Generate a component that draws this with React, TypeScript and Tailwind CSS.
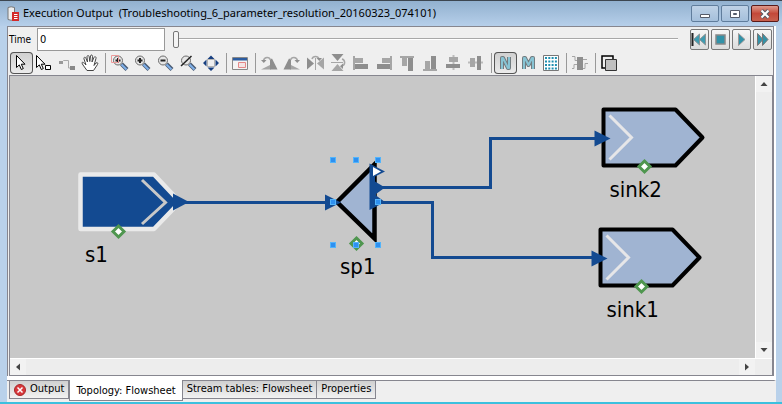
import { useState } from "react";
import type { ReactNode } from "react";

const BLUE = "#134a91";
const STEEL = "#a0b4d2";
const GREY = "#a6a6a6";
const DARK = "#8e8e8e";

type Tool = { label: string; icon: ReactNode };

const Cursor = ({ x = 0 }: { x?: number }) => (
  <path
    d={`M${x + 6.5} 3.500v12l2.800-2.600 2 4.600 2-.9-2-4.400h3.700z`}
    fill="#fff"
    stroke="#000"
    strokeWidth="1"
  />
);

const Lens = ({ children }: { children?: ReactNode }) => (
  <>
    <path d="M12.500 12l5.500 5.500" stroke="#4a5a72" strokeWidth="4" />
    <path d="M12.500 12.500l5 5" stroke="#7fb0ea" strokeWidth="2" />
    <circle cx="9" cy="8.500" r="4.500" fill="#e6e6e6" stroke="#6c6c6c" />
    {children}
  </>
);

const Turn = () => (
  <>
    <path d="M3 17.500l10-5v5z" fill={GREY} />
    <path d="M12 7.500l2-1 5.500 11H12z" fill={DARK} />
    <path d="M5.500 8.500c1-4 6-4 7-.5" fill="none" stroke={GREY} strokeWidth="1.500" />
    <path d="M3 8h5.500l-2.700 3z" fill={DARK} />
  </>
);

const Mirror = () => (
  <>
    <path d="M3 5.500v12l7-6z" fill={DARK} />
    <path d="M20 5.500v12l-7-6z" fill={GREY} />
    <path d="M11.500 6v12" stroke={GREY} />
    <path d="M8 7c1-3.500 6-3.500 7 0" fill="none" stroke={GREY} strokeWidth="1.500" />
    <path d="M12.500 6h5.500l-2.700 3z" fill={DARK} />
  </>
);

const AlignSide = () => (
  <>
    <path d="M4 4v14" stroke={GREY} strokeWidth="2" />
    <path d="M5 6h8v5H5z" fill={GREY} />
    <path d="M5 12h13v5H5z" fill={DARK} />
  </>
);

const AlignMiddle = () => (
  <>
    <path d="M11.500 3v15" stroke="#bbb" strokeWidth="2" />
    <path d="M7 5h9v5H7z" fill={GREY} />
    <path d="M4 12h14v4H4z" fill={DARK} />
  </>
);

const Letter = ({ d }: { d: string }) => (
  <>
    <path d={d} fill="none" stroke="#727c80" strokeWidth="4" strokeLinejoin="round" />
    <path d={d} fill="none" stroke="#88c4d4" strokeWidth="2" strokeLinejoin="round" />
  </>
);

const groups: Tool[][] = [
  [
    { label: "Select", icon: <Cursor /> },
    {
      label: "Select area",
      icon: (
        <>
          <Cursor x={-3} />
          <path d="M12.500 13.500h5v4h-5z" fill="#fff" stroke="#000" />
        </>
      ),
    },
    {
      label: "Connect",
      icon: (
        <>
          <path d="M3 9h4v3H3z" fill="#999" />
          <path d="M14 14h5v4h-5z" fill="#888" />
          <path d="M7.500 9V8.500h5V16H14" fill="none" stroke="#aaa" />
        </>
      ),
    },
    {
      label: "Pan",
      icon: (
        <path
          d="M8 18.500l-4-5.500c-2-3-.5-3.500 1.500-1.500L7 13 5 7c-.5-2 1.500-2.500 2-.5L8.500 10 8 5c0-2 2-2 2.200 0l.6 4.500.7-5.500c.3-1.500 2-1.300 2 .3L13 10l2-4.500c.7-1.500 2.300-.8 2 .8l-2 7.200 2-2.500c1.500-1 2.300.3 1.500 1.500l-4 6z"
          fill="#fff"
          stroke="#444"
        />
      ),
    },
  ],
  [
    {
      label: "Zoom to area",
      icon: (
        <>
          <g transform="translate(1 0)">
            <Lens>
              <path d="M6.500 8.500h5M9 6v5" stroke="#222" strokeWidth="2" />
            </Lens>
          </g>
          <path d="M3.500 3.500h7v7h-7z" fill="none" stroke="#ec9a9a" />
        </>
      ),
    },
    {
      label: "Zoom in",
      icon: (
        <Lens>
          <path d="M6.500 8.500h5M9 6v5" stroke="#222" strokeWidth="2" />
        </Lens>
      ),
    },
    {
      label: "Zoom out",
      icon: (
        <Lens>
          <path d="M6.500 8.500h5" stroke="#222" strokeWidth="2" />
        </Lens>
      ),
    },
    {
      label: "Reset zoom",
      icon: (
        <Lens>
          <path d="M4 14L14.500 4" stroke="#222" strokeWidth="1.500" />
        </Lens>
      ),
    },
    {
      label: "Fit to window",
      icon: (
        <>
          <path d="M7.500 7.500h7v7h-7z" fill="none" stroke="#777" strokeDasharray="1 1" />
          <path d="M11 3.500L14.500 7h-7zM11 19l3.500-3.500h-7zM3 11l3.500-3.500v7zM19 11l-3.500-3.500v7z" fill="#173f80" />
        </>
      ),
    },
  ],
  [
    {
      label: "Properties window",
      icon: (
        <>
          <path d="M3.500 5.500h15v12h-15z" fill="#f4f4f4" stroke="#888" />
          <path d="M4 6h14v2.500H4z" fill="#2c5ca0" />
          <path d="M9.500 10.500h7v5h-7z" fill="#f4e4e4" stroke="#e58888" />
        </>
      ),
    },
  ],
  [
    { label: "Rotate left", icon: <Turn /> },
    { label: "Rotate right", icon: <g transform="matrix(-1 0 0 1 22 0)"><Turn /></g> },
    { label: "Flip horizontally", icon: <Mirror /> },
    { label: "Flip vertically", icon: <g transform="matrix(0 1 -1 0 22 -1)"><Mirror /></g> },
    { label: "Align left", icon: <AlignSide /> },
    { label: "Align right", icon: <g transform="matrix(-1 0 0 1 22 0)"><AlignSide /></g> },
    { label: "Align top", icon: <g transform="matrix(0 1 1 0 0 1)"><AlignSide /></g> },
    { label: "Align bottom", icon: <g transform="rotate(-90 11 11)"><AlignSide /></g> },
    { label: "Align centre", icon: <AlignMiddle /> },
    { label: "Align middle", icon: <g transform="rotate(-90 11 11)"><AlignMiddle /></g> },
  ],
  [
    { label: "Show names", icon: <Letter d="M8 17V6h1l5 10h1V5" /> },
    { label: "Show models", icon: <Letter d="M7 17V6h1l3.500 7L15 6h1v11" /> },
    {
      label: "Show grid",
      icon: (
        <>
          <path d="M3.500 3.500h15v15h-15z" fill="#fff" stroke="#777" />
          <path
            d="M5 6h12M5 9.500h12M5 13h12M5 16.500h12"
            stroke="#1f8fb0"
            strokeWidth="2"
            strokeDasharray="2 1.300"
          />
        </>
      ),
    },
  ],
  [
    {
      label: "Route connections",
      icon: (
        <>
          <path d="M8 5h6v13H8z" fill={DARK} />
          <path d="M3 4.500h3v4h2M3 16.500h2v-4h3M14 7.500h4M14 16.500h2v-5h3" fill="none" stroke={GREY} />
        </>
      ),
    },
  ],
  [
    {
      label: "Layers",
      icon: (
        <>
          <path d="M4 4h11v12H4z" fill="#efefef" stroke="#000" strokeWidth="1.500" />
          <path d="M7.500 7.500h11v11h-11z" fill="#c0c0c0" stroke="#333" />
        </>
      ),
    },
  ],
];

const media: Tool[] = [
  {
    label: "Rewind",
    icon: (
      <>
        <path d="M2.500 3v13" stroke="#222" strokeWidth="2" />
        <path d="M9.500 4v11l-6-5.500zM15.500 4v11l-6-5.500z" fill="#3f9bb0" stroke="#8c9496" />
      </>
    ),
  },
  { label: "Stop", icon: <path d="M5 5h9v9H5z" fill="#3292a8" stroke="#888" strokeWidth="1.500" /> },
  { label: "Play", icon: <path d="M6.500 3.500v12l6.500-6z" fill="#3292a8" stroke="#999" /> },
  {
    label: "Fast forward",
    icon: <path d="M4.500 3.500v12l5.500-6zM9.500 3.500v12l5.500-6z" fill="#3292a8" stroke="#777" />,
  },
];

const Port = ({ x, y }: { x: number; y: number }) => (
  <path d={`M${x} ${y - 5.5}l5.500 5.500-5.500 5.500-5.500-5.500z`} fill="#fff" stroke="#4f964f" strokeWidth="3" />
);

const Sink = ({ x, y, name }: { x: number; y: number; name: string }) => (
  <g>
    <path d={`M${x} ${y - 28}h72l27 28-27 28h-72z`} fill={STEEL} stroke="#000" strokeWidth="4" strokeLinejoin="round" />
    <path d={`M${x + 6} ${y - 22}l22 22-22 22`} fill="none" stroke="#e6e6e8" strokeWidth="3" />
    <path d={`M${x - 9} ${y - 7}l16 8-16 8z`} fill={BLUE} />
    <Port x={x + 41} y={y + 29} />
    <text x={x + 6} y={y + 59} fontSize="22">
      {name}
    </text>
  </g>
);

const handles = [
  [333, 160], [356, 160], [378, 160], [333, 202], [378, 202], [333, 245], [356, 245], [378, 245],
];

function Flowsheet() {
  return (
    <svg
      viewBox="10 76 745 282"
      width="745"
      height="282"
      className="block shrink-0 font-['DejaVu_Sans_Condensed','DejaVu_Sans',sans-serif] [font-stretch:condensed]"
      role="img"
      aria-label="Flowsheet topology"
    >
      <g fill="none" stroke={BLUE} strokeWidth="3">
        <path d="M180 202.500H330" />
        <path d="M380 187.500H490.500V138.500H598" />
        <path d="M380 202.500H432.500V257.500H595" />
      </g>
      <path d="M80.500 174.500H154L180 202l-26 27H80.500z" fill={BLUE} stroke="#eaeaea" strokeWidth="4.500" strokeLinejoin="round" />
      <path d="M142 180l23.500 22.500L142 224" fill="none" stroke="#c8c8c8" strokeWidth="3" />
      <path d="M173 193.500l16 8.500-16 8.500z" fill={BLUE} />
      <Port x={118.5} y={231.5} />
      <text x="85" y="262" fontSize="22">s1</text>

      <path d="M337 202l37.500-37.500v74z" fill={STEEL} stroke="#000" strokeWidth="4.500" />
      <path d="M325 194.500l16 8-16 8z" fill={BLUE} />
      <path d="M369.500 163.500l15.500 8-10 5v5l10 6-9 6.500v1.500l9 6.500-15.500 8z" fill={BLUE} />
      <path d="M373 167l8 4.500-8 4.500z" fill="#fff" />
      <Port x={356.5} y={243.5} />
      <text x="340" y="274" fontSize="22">sp1</text>
      {handles.map(([x, y]) => (
        <rect key={`${x}-${y}`} x={x - 2.5} y={y - 2.5} width="5" height="5" fill="#2f90f0" stroke="#52b4fb" />
      ))}

      <Sink x={603.5} y={137.5} name="sink2" />
      <Sink x={600.5} y={257.5} name="sink1" />
    </svg>
  );
}

function ScrollArrow({ label, d }: { label: string; d: string }) {
  return (
    <button aria-label={label} className="flex size-4 shrink-0 items-center justify-center bg-[#f2f2f2]">
      <svg width="8" height="8" viewBox="0 0 8 8">
        <path d={d} fill="#444" />
      </svg>
    </button>
  );
}

const tabs = ["Output", "Topology: Flowsheet", "Stream tables: Flowsheet", "Properties"];

export default function App() {
  const [active, setActive] = useState(tabs[1]);
  const [tool, setTool] = useState("Select");
  const [names, setNames] = useState(true);
  const isOn = (label: string) => label === tool || (label === "Show names" && names);

  return (
    <div className="flex min-h-screen flex-col border-t border-b-2 border-t-[#3c4650] border-b-[#3cc0de] bg-[#b9d1ea] font-['DejaVu_Sans_Condensed','DejaVu_Sans',sans-serif] text-[11px] text-black [font-stretch:condensed]">
      <header className="flex h-[25px] items-center bg-linear-to-b from-[#92b1cf] to-[#b6cfea] pr-[3px] pl-[7px]">
        <svg width="13" height="16" viewBox="0 0 13 16" aria-hidden="true">
          <path d="M1 1.500Q4 0 7.500 1.500v12Q4 15 1 13.500z" fill="#eee" stroke="#777" />
          <path d="M5 6h7v9H5z" fill="#d42a2a" />
          <path d="M7 8.500h3.500M7 10.500h3.500M7 12.500h3.500" stroke="#fff" />
        </svg>
        <h1 className="ml-[3px] flex-1 font-['Noto_Sans',sans-serif] text-[11px] whitespace-pre">
          {"Execution Output  (Troubleshooting_6_parameter_resolution_20160323_074101)"}
        </h1>
        <div className="flex gap-0.5">
          <button aria-label="Minimize" className="flex h-[17px] w-7 items-center justify-center rounded-xs border border-[#607d9c] bg-linear-to-b from-[#bfd2e6] to-[#a4bfdb]">
            <svg width="12" height="10" viewBox="0 0 12 10"><path d="M1.500 5.500h9v3h-9z" fill="#fff" stroke="#555b68" /></svg>
          </button>
          <button aria-label="Maximize" className="flex h-[17px] w-7 items-center justify-center rounded-xs border border-[#607d9c] bg-linear-to-b from-[#bfd2e6] to-[#a4bfdb]">
            <svg width="12" height="10" viewBox="0 0 12 10"><path d="M1.500 1.500h9v7h-9zM4.500 4.500v1h3v-1z" fill="#fff" fillRule="evenodd" stroke="#555b68" /></svg>
          </button>
          <button aria-label="Close" className="flex h-[17px] w-7 items-center justify-center rounded-xs border border-[#5a1a18] bg-linear-to-b from-[#dd9a8c] via-[#c4483a] to-[#c8604e]">
            <svg width="12" height="10" viewBox="0 0 12 10">
              <path d="M2.500 1.500l7 7M9.500 1.500l-7 7" stroke="#555b68" strokeWidth="4" />
              <path d="M2.500 1.500l7 7M9.500 1.500l-7 7" stroke="#fff" strokeWidth="2" />
            </svg>
          </button>
        </div>
      </header>

      <main className="mr-1.5 ml-[7px] flex flex-1 flex-col bg-[#efefef]">
        <div className="flex flex-1 flex-col border-r-2 border-b border-r-white border-b-[#86868f] bg-white">
          <section className="mb-1 flex flex-1 flex-col border border-b-0 border-[#86868f] bg-[#efefef]">
            <div className="flex h-6 items-center pr-px">
              <label htmlFor="time" className="w-[29px] shrink-0 pl-px text-[10px]">Time</label>
              <input id="time" defaultValue="0" className="h-[23px] w-32 border border-[#999] bg-white px-0.5 outline-none" />
              <input
                type="range"
                aria-label="Time position"
                min={0}
                max={100}
                defaultValue={0}
                className="ml-2 h-5 min-w-0 flex-1 appearance-none bg-transparent [&::-webkit-slider-runnable-track]:h-0.5 [&::-webkit-slider-runnable-track]:border-t [&::-webkit-slider-runnable-track]:border-[#a8a8a8] [&::-webkit-slider-runnable-track]:bg-white [&::-webkit-slider-thumb]:-mt-2 [&::-webkit-slider-thumb]:h-[17px] [&::-webkit-slider-thumb]:w-1.5 [&::-webkit-slider-thumb]:appearance-none [&::-webkit-slider-thumb]:rounded-xs [&::-webkit-slider-thumb]:border [&::-webkit-slider-thumb]:border-[#777] [&::-webkit-slider-thumb]:bg-[#f4f4f4]"
              />
              <div className="ml-3 flex gap-0.5">
                {media.map(({ label, icon }) => (
                  <button key={label} aria-label={label} className="flex h-[21px] w-[19px] items-center justify-center rounded-xs border border-[#777] bg-linear-to-b from-[#f6f6f6] to-[#dcdcdc]">
                    <svg width="19" height="19" viewBox="0 0 19 19" className="shrink-0">{icon}</svg>
                  </button>
                ))}
              </div>
            </div>

            <div className="flex h-6 items-center pl-0.5" role="toolbar">
              {groups.map((group, i) => (
                <div key={group[0].label} className="flex items-center">
                  {i > 0 && <span className="mr-0.5 ml-[3px] h-5 w-px bg-[#999]" />}
                  {group.map(({ label, icon }) => (
                    <button
                      key={label}
                      aria-label={label}
                      aria-pressed={isOn(label)}
                      onClick={() => (label === "Show names" ? setNames(!names) : setTool(label))}
                      className={
                        isOn(label)
                          ? "h-[22px] w-[23px] rounded-sm bg-linear-to-b from-[#cfcfcf] to-[#ececec] inset-ring inset-ring-[#555]"
                          : "h-[22px] w-[23px]"
                      }
                    >
                      <svg width="23" height="22" viewBox="0 0 23 22" className="block">{icon}</svg>
                    </button>
                  ))}
                </div>
              ))}
            </div>

            <div className="ml-px flex flex-1 flex-col border border-[#86868f]">
              <div className="flex flex-1">
                <div className="min-w-0 flex-1 overflow-hidden bg-[#c8c8c8]">
                  <Flowsheet />
                </div>
                <div className="flex w-[17px] flex-col justify-between border-l border-white bg-[#ededed]">
                  <ScrollArrow label="Scroll up" d="M0.500 6L4 2l3.500 4z" />
                  <ScrollArrow label="Scroll down" d="M0.500 2L4 6l3.500-4z" />
                </div>
              </div>
              <div className="flex h-[17px] justify-between border-t border-white bg-[#ededed] pr-[17px]">
                <ScrollArrow label="Scroll left" d="M6 0.500L2 4l4 3.500z" />
                <ScrollArrow label="Scroll right" d="M2 0.500L6 4 2 7.500z" />
              </div>
            </div>
          </section>
        </div>

        <nav className="flex h-[21px] items-start pl-0.5" role="tablist">
          {tabs.map((tab) => (
            <button
              key={tab}
              role="tab"
              aria-selected={tab === active}
              onClick={() => setActive(tab)}
              className={
                tab === active
                  ? "-mt-px flex h-[21px] items-center border border-t-0 border-[#86868f] bg-white px-1.5 pt-0.5 whitespace-nowrap"
                  : "flex h-[18px] items-center gap-1 border-r border-b border-[#86868f] bg-linear-to-b from-[#d0d0d0] to-[#f2f2f2] px-1 whitespace-nowrap first:border-l"
              }
            >
              {tab === "Output" && (
                <svg width="12" height="12" viewBox="0 0 12 12" aria-hidden="true">
                  <circle cx="6" cy="6" r="5.500" fill="#d8383c" stroke="#a82828" />
                  <path d="M3.500 3.500l5 5M8.500 3.500l-5 5" stroke="#fff" strokeWidth="1.500" />
                </svg>
              )}
              {tab}
            </button>
          ))}
        </nav>
      </main>
    </div>
  );
}
